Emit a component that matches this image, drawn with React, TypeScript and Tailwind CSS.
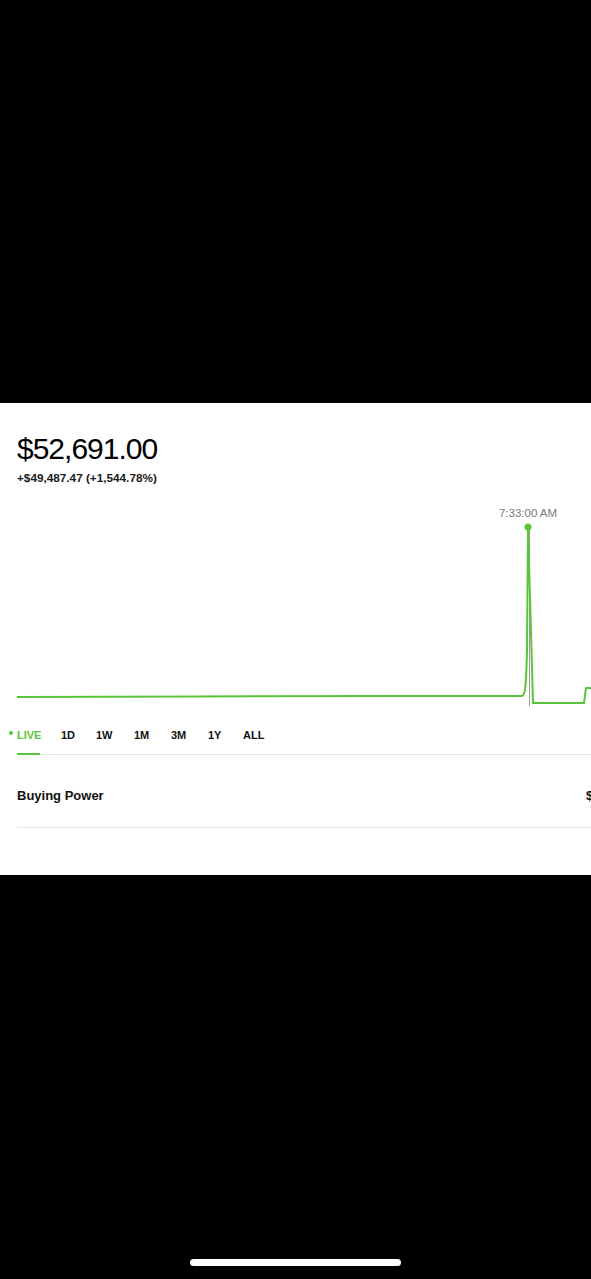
import React from "react";

const GREEN = "#5ac53b";

const tabs = ["1D", "1W", "1M", "3M", "1Y", "ALL"];

// left x of each tab label, in page pixels
const tabX = [61, 96, 134, 171, 208, 243];

const Chart = () => {
  const line =
    "M17 197 L200 196.5 L400 196 L522 196 C525 195 526 190 527 150 L528 27 L533 203 L584 203 L586 188 L591 188";
  return (
    <svg width="591" height="215" viewBox="0 0 591 215" className="block">
      <text
        x="528"
        y="17"
        textAnchor="middle"
        fontSize="11.5"
        fill="#7a7a7a"
        fontFamily="'Liberation Sans', Arial, sans-serif"
      >
        7:33:00 AM
      </text>
      <line x1="529.5" y1="30" x2="529.5" y2="206" stroke="#9a9a9a" strokeWidth="1" />
      <path d={line} fill="none" stroke={GREEN} strokeWidth="2" strokeLinejoin="round" />
      <circle cx="528" cy="27" r="3.5" fill={GREEN} />
    </svg>
  );
};

export default function App() {
  return (
    <div className="w-[591px] h-[1279px] bg-black flex flex-col overflow-hidden" style={{ fontFamily: "'Liberation Sans', Arial, sans-serif" }}>
      <div className="h-[403px] shrink-0" />
      <div className="h-[472px] bg-white shrink-0 overflow-hidden">
        <div className="pl-[17px] pt-[28px]">
          <div className="text-[30px] leading-[36px] text-black tracking-[-1px]">$52,691.00</div>
          <div className="text-[11.75px] font-bold leading-[14px] mt-[4px] text-[#1a1a1a]">
            +$49,487.47 (+1,544.78%)
          </div>
        </div>
        <div className="mt-[15px]">
          <Chart />
        </div>
        <div className="relative h-[40px]">
          <span className="absolute left-[9px] top-[16px] w-[4px] h-[4px] rounded-full" style={{ background: GREEN }} />
          <span className="absolute left-[17px] top-[12px] text-[11px] font-bold" style={{ color: GREEN }}>LIVE</span>
          {tabs.map((t, i) => (
            <span
              key={t}
              className="absolute top-[12px] text-[11px] font-bold text-[#111]"
              style={{ left: tabX[i] }}
            >
              {t}
            </span>
          ))}
          <div className="absolute left-[17px] bottom-0 w-[574px] h-px bg-[#e6e6e6]" />
          <div className="absolute left-[17px] bottom-0 w-[23px] h-[2px]" style={{ background: GREEN }} />
        </div>
        <div className="flex items-start pt-[33px] h-[73px] ml-[17px] border-b border-[#e8e8e8]">
          <div className="w-[569px] shrink-0 text-[13px] leading-[16px] font-bold text-[#111]">Buying Power</div>
          <div className="shrink-0 text-[13px] leading-[16px] font-bold text-[#111]">$3,203.53</div>
        </div>
      </div>
      <div className="flex-1 flex items-end justify-center pb-[13px]">
        <div className="w-[211px] h-[7px] rounded-full bg-white" />
      </div>
    </div>
  );
}
